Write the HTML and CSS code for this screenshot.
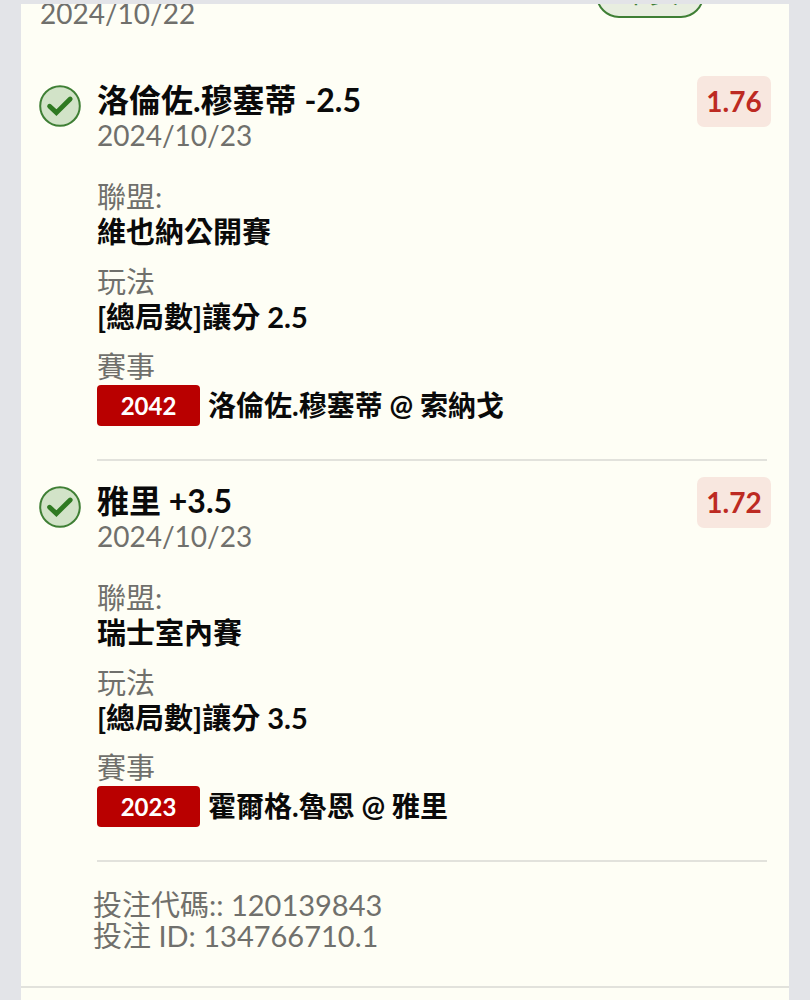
FILE: index.html
```html
<!DOCTYPE html>
<html lang="zh-Hant">
<head>
    <meta charset="UTF-8">
    <meta name="viewport" content="width=device-width, initial-scale=1">
    <title>投注紀錄</title>
    <link rel="stylesheet" href="styles.css">
</head>
<body>

<main class="ticket">
    <header class="ticket-head">
        <time class="date">2024/10/22</time>
        <span class="status">中獎</span>
    </header>

    <!-- first leg -->
    <section class="leg">
        <svg class="check" viewBox="0 0 42 42" aria-hidden="true">
            <circle cx="21" cy="21" r="19.8" fill="#d2e3c8" stroke="#3f7f35" stroke-width="2"/>
            <path d="M10.6 21.2l6.8 6.4L31.2 14" fill="none" stroke="#2f7a22" stroke-width="4.8" stroke-linecap="round"/>
        </svg>
        <div class="leg-body">
            <div class="leg-head">
                <div>
                    <h2 class="pick">洛倫佐.穆塞蒂 -2.5</h2>
                    <time class="date">2024/10/23</time>
                </div>
                <span class="odds">1.76</span>
            </div>
            <dl class="info">
                <dt>聯盟:</dt>
                <dd>維也納公開賽</dd>
                <dt>玩法</dt>
                <dd>[總局數]讓分 2.5</dd>
                <dt>賽事</dt>
                <dd class="match"><span class="code">2042</span><span>洛倫佐.穆塞蒂 @ 索納戈</span></dd>
            </dl>
        </div>
    </section>

    <!-- second leg -->
    <section class="leg">
        <svg class="check" viewBox="0 0 42 42" aria-hidden="true">
            <circle cx="21" cy="21" r="19.8" fill="#d2e3c8" stroke="#3f7f35" stroke-width="2"/>
            <path d="M10.6 21.2l6.8 6.4L31.2 14" fill="none" stroke="#2f7a22" stroke-width="4.8" stroke-linecap="round"/>
        </svg>
        <div class="leg-body">
            <div class="leg-head">
                <div>
                    <h2 class="pick">雅里 +3.5</h2>
                    <time class="date">2024/10/23</time>
                </div>
                <span class="odds">1.72</span>
            </div>
            <dl class="info">
                <dt>聯盟:</dt>
                <dd>瑞士室內賽</dd>
                <dt>玩法</dt>
                <dd>[總局數]讓分 3.5</dd>
                <dt>賽事</dt>
                <dd class="match"><span class="code">2023</span><span>霍爾格.魯恩 @ 雅里</span></dd>
            </dl>
        </div>
    </section>

    <footer class="ticket-foot">
        <div>投注代碼:: 120139843</div>
        <div>投注 ID: 134766710.1</div>
    </footer>
</main>

</body>
</html>
```

FILE: styles.css
```css
* {
    box-sizing: border-box;
}

body {
    margin: 0;
    padding: 4px 21px 0;
    background: #e3e4e8;
    color: #0a0a0a;
    font-family: Lato, "Noto Sans CJK TC", sans-serif;
    font-size: 29px;
    line-height: 35px;
}

.ticket {
    min-height: calc(100vh - 4px);
    background: #fefef5;
    overflow: hidden;
}

/* the top of the ticket is scrolled out of view */
.ticket-head {
    display: flex;
    justify-content: space-between;
    align-items: flex-start;
    margin-top: -32px;
    padding: 0 85px 0 19px;
}

.ticket-head .date {
    margin-top: 24px;
}

.status {
    width: 108px;
    height: 46px;
    border: 2px solid #3f7f35;
    border-radius: 23px;
    background: #e8eee0;
    color: #3f7f35;
    font-size: 28px;
    line-height: 36px;
    text-align: center;
}

.date {
    display: block;
    color: #70706c;
    font-size: 28px;
}

.leg {
    display: flex;
    gap: 16px;
    padding: 16px 18px 0;
}

.ticket-head + .leg {
    margin-top: 29px;
}

.check {
    flex: none;
    width: 42px;
    height: 42px;
    margin-top: 9px;
}

.leg-body {
    flex: 1;
}

.leg-head {
    display: flex;
    justify-content: space-between;
    align-items: flex-start;
}

.pick {
    margin: 6px 0 0;
    font-size: 32px;
    font-weight: bold;
    line-height: 36px;
}

.odds {
    width: 74px;
    border-radius: 7px;
    background: #f8e7df;
    color: #bd2a22;
    font-size: 28px;
    font-weight: bold;
    line-height: 51px;
    text-align: center;
}

.info {
    margin: 0 4px 0 0;
    padding: 26px 0 33px;
    border-bottom: 2px solid #e2e2dc;
}

.info dt {
    color: #70706c;
}

.info dd {
    margin: 0 0 15px;
    font-weight: bold;
}

.info .match {
    display: flex;
    align-items: center;
    gap: 8px;
    margin: 1px 0 0;
    font-size: 28px;
}

.code {
    width: 103px;
    border-radius: 4px;
    background: #b90000;
    color: #fff;
    font-size: 24px;
    line-height: 41px;
    text-align: center;
}

.ticket-foot {
    padding: 27px 72px 35px;
    border-bottom: 2px solid #e2e2dc;
    color: #70706c;
    line-height: 31px;
}
```
